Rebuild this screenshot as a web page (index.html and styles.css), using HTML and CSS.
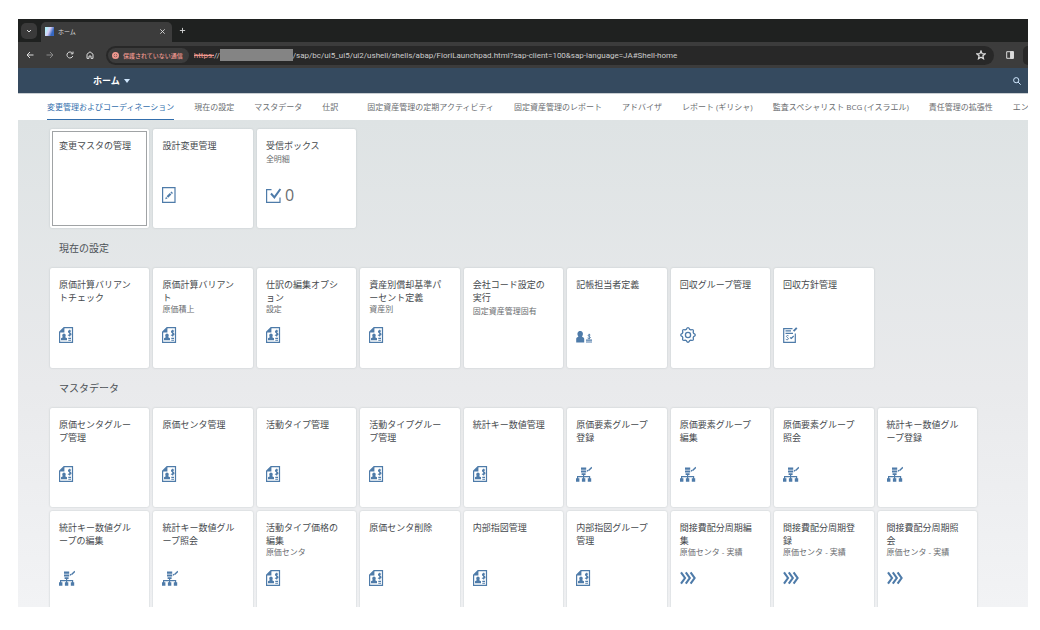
FILE: index.html
```html
<!DOCTYPE html>
<html lang="ja">
<head>
<meta charset="utf-8">
<title>ホーム</title>
<link rel="stylesheet" href="styles.css">
</head>
<body>
<svg class="defs" aria-hidden="true">
  <symbol id="i-cost" viewBox="0 0 16 16">
    <path fill="none" stroke="currentColor" stroke-width="1.2" d="M5 .7H13.5V15.3H.6V5z"/>
    <path fill="currentColor" d="M.3 5.4L5.4.3V5.4zM2 13.2V11.2L3.8 10.2C2.8 8.8 3.1 6.5 5 6.5S7.2 8.8 6.2 10.2L8 11.2V13.2zM9.3 10.8H12V11.9H9.3zM9.3 12.7H12V13.8H9.3z"/>
    <path fill="none" stroke="currentColor" stroke-width="1.1" d="M12 4.2C10.8 3.3 9.3 3.8 9.5 4.8S12 6 12 7.2S10 8.8 9 7.9M10.7 2.8V9.4"/>
  </symbol>
  <symbol id="i-edit" viewBox="0 0 16 16">
    <path fill="none" stroke="currentColor" stroke-width="1.2" d="M.6.7H13V15.3H.6z"/>
    <path fill="currentColor" d="M3.2 12.2L4 9.8L5.6 11.4zM4.6 9.2L7.8 6L9.4 7.6L6.2 10.8zM8.4 5.4L9.4 4.4L11 6L10 7z"/>
  </symbol>
  <symbol id="i-check" viewBox="0 0 16 16">
    <path fill="none" stroke="currentColor" stroke-width="1.2" d="M5.5 2.7H.6V15.4H14V10.5"/>
    <path fill="none" stroke="currentColor" stroke-width="2" d="M5 6.5L8.4 10.4L14.4 2"/>
  </symbol>
  <symbol id="i-person" viewBox="0 0 16 16">
    <path fill="currentColor" d="M.2 15.5V11.5Q.4 10.2 2.4 9.7C.4 6.5 1.8 4 4.2 4S8 6.5 6 9.7Q8 10.2 8.2 11.5V15.5zM10 12.6H16V13.7H10zM10 14.5H16V15.6H10z"/>
    <path fill="none" stroke="currentColor" d="M14.3 8C12.8 7.2 12 8 12.3 8.8S14.4 9.6 14.3 10.6S12.6 11.7 11.6 11M13.2 6.8V12.3"/>
  </symbol>
  <symbol id="i-gear" viewBox="0 0 16 16">
    <path fill="none" stroke="currentColor" stroke-width="1.3" stroke-linejoin="round" d="M6.3 2.4Q8-1 9.7 2.4L10.8 2.8Q14.3 1.7 13.2 5.2L13.6 6.3Q17 8 13.6 9.7L13.2 10.8Q14.3 14.3 10.8 13.2L9.7 13.6Q8 17 6.3 13.6L5.2 13.2Q1.7 14.3 2.8 10.8L2.4 9.7Q-1 8 2.4 6.3L2.8 5.2Q1.7 1.7 5.2 2.8z"/>
    <circle cx="8" cy="8" r="2.6" fill="none" stroke="currentColor" stroke-width="1.3"/>
  </symbol>
  <symbol id="i-policy" viewBox="0 0 16 16">
    <path fill="none" stroke="currentColor" stroke-width="1.2" d="M9.5 1.6H.7V15.4H12.3V6.5M2.5 3.9H8M2.5 6.3H10M7 10.4L8.3 11.4L10.7 9"/>
    <path fill="none" stroke="currentColor" stroke-width="1.8" d="M10.6 4.2L13.8.8"/>
    <path fill="none" stroke="currentColor" d="M5.5 8.8C4 8 3.2 9 3.6 9.8S5.8 10.8 5.3 12S3.6 12.8 2.8 12.2"/>
  </symbol>
  <symbol id="i-tree" viewBox="0 0 16 16">
    <path fill="currentColor" d="M5 1.6H10.2V3.8H5zM5 4.5H10.2V6.6H5zM5.6 7.2H9.6V9H5.6zM0 12.3H3.4V15.8H0zM5.9 12.3H9.3V15.8H5.9zM11.8 12.3H15.2V15.8H11.8z"/>
    <path fill="none" stroke="currentColor" stroke-width="1.2" d="M1.6 13V10.6H13.6V13M7.6 8.5V13"/>
    <path fill="none" stroke="currentColor" stroke-width="1.4" d="M11 4.4L12.2 5.2M12.6 4.5L15.9 1.3"/>
  </symbol>
  <symbol id="i-flow" viewBox="0 0 16 16">
    <path fill="none" stroke="currentColor" stroke-width="2.1" d="M1 2.3L5 8L1 13.7M5.8 2.3L9.8 8L5.8 13.7M10.6 2.3L14.6 8L10.6 13.7"/>
  </symbol>
</svg>

<div class="window">
  <div class="tabstrip">
    <button class="tabsearch" aria-label="タブを検索"><svg viewBox="0 0 8 8"><path d="M2 3l2 2 2-2"/></svg></button>
    <div class="browser-tab">
      <span class="favicon"></span>
      <span class="tab-title">ホーム</span>
      <button class="plain" aria-label="閉じる"><svg viewBox="0 0 8 8"><path d="M1.5 1.5l5 5M6.5 1.5l-5 5"/></svg></button>
    </div>
    <button class="plain newtab" aria-label="新しいタブ"><svg viewBox="0 0 8 8"><path d="M4 1v6M1 4h6"/></svg></button>
  </div>

  <div class="toolbar">
    <button class="plain" aria-label="戻る"><svg viewBox="0 0 8 8"><path d="M7.5 4H1M4 1L1 4l3 3"/></svg></button>
    <button class="plain dim" aria-label="進む"><svg viewBox="0 0 8 8"><path d="M.5 4H7M4 1l3 3-3 3"/></svg></button>
    <button class="plain" aria-label="再読み込み"><svg viewBox="0 0 8 8"><path d="M6.8 5A3 3 0 1 1 6.4 2.2M7 .6v2.2H4.8"/></svg></button>
    <button class="plain" aria-label="ホームページ"><svg viewBox="0 0 8 8"><path d="M1 3.2L4 .8l3 2.4v4.2H5V5H3v2.4H1z"/></svg></button>
    <div class="address">
      <span class="chip"><svg viewBox="0 0 8 8"><circle cx="4" cy="4" r="3"/><path d="M2.9 2.9l2.2 2.2M5.1 2.9L2.9 5.1"/></svg>保護されていない通信</span>
      <span class="url"><s>https:</s>//<span class="mask"></span>/sap/bc/ui5_ui5/ui2/ushell/shells/abap/FioriLaunchpad.html?sap-client=100&amp;sap-language=JA#Shell-home</span>
      <button class="plain star" aria-label="ブックマーク"><svg viewBox="0 0 8 8"><path d="M4 .8l.9 2.1 2.4.2-1.8 1.5.5 2.4L4 5.8 2 7l.5-2.4L.7 3.1l2.4-.2z"/></svg></button>
    </div>
    <button class="plain" aria-label="サイドパネル"><svg viewBox="0 0 8 8"><path d="M.7.7h6.6v6.6H.7z"/><path class="solid" d="M4.6.7h2.7v6.6H4.6z"/></svg></button>
    <span class="edge"></span>
  </div>

  <header class="shell">
    <button class="title">ホーム<span class="caret"></span></button>
    <button class="search" aria-label="検索"><svg viewBox="0 0 8 8"><circle cx="3.2" cy="3.2" r="2.6"/><path d="M5.1 5.1l2.6 2.6"/></svg></button>
  </header>

  <nav class="groups">
    <a class="current" href="#">変更管理およびコーディネーション</a>
    <a href="#">現在の設定</a>
    <a href="#">マスタデータ</a>
    <a class="wide" href="#">仕訳</a>
    <a href="#">固定資産管理の定期アクティビティ</a>
    <a href="#">固定資産管理のレポート</a>
    <a href="#">アドバイザ</a>
    <a href="#">レポート (ギリシャ)</a>
    <a href="#">監査スペシャリスト BCG (イスラエル)</a>
    <a href="#">責任管理の拡張性</a>
    <a href="#">エン</a>
  </nav>

  <main class="content">
    <section class="tiles">
      <a class="tile focused" href="#"><h3>変更マスタの管理</h3></a>
      <a class="tile" href="#"><h3>設計変更管理</h3><svg class="icon"><use href="#i-edit"/></svg></a>
      <a class="tile" href="#"><h3>受信ボックス</h3><p class="spaced">全明細</p><span class="kpi"><svg class="icon"><use href="#i-check"/></svg>0</span></a>
    </section>

    <h2>現在の設定</h2>
    <section class="tiles">
      <a class="tile" href="#"><h3>原価計算バリアントチェック</h3><svg class="icon"><use href="#i-cost"/></svg></a>
      <a class="tile" href="#"><h3>原価計算バリアント</h3><p>原価積上</p><svg class="icon"><use href="#i-cost"/></svg></a>
      <a class="tile" href="#"><h3>仕訳の編集オプション</h3><p>設定</p><svg class="icon"><use href="#i-cost"/></svg></a>
      <a class="tile" href="#"><h3>資産別償却基準パーセント定義</h3><p>資産別</p><svg class="icon"><use href="#i-cost"/></svg></a>
      <a class="tile" href="#"><h3>会社コード設定の実行</h3><p class="spaced">固定資産管理固有</p></a>
      <a class="tile" href="#"><h3>記帳担当者定義</h3><svg class="icon"><use href="#i-person"/></svg></a>
      <a class="tile" href="#"><h3>回収グループ管理</h3><svg class="icon"><use href="#i-gear"/></svg></a>
      <a class="tile" href="#"><h3>回収方針管理</h3><svg class="icon"><use href="#i-policy"/></svg></a>
    </section>

    <h2>マスタデータ</h2>
    <section class="tiles">
      <a class="tile" href="#"><h3>原価センタグループ管理</h3><svg class="icon"><use href="#i-cost"/></svg></a>
      <a class="tile" href="#"><h3>原価センタ管理</h3><svg class="icon"><use href="#i-cost"/></svg></a>
      <a class="tile" href="#"><h3>活動タイプ管理</h3><svg class="icon"><use href="#i-cost"/></svg></a>
      <a class="tile" href="#"><h3>活動タイプグループ管理</h3><svg class="icon"><use href="#i-cost"/></svg></a>
      <a class="tile" href="#"><h3>統計キー数値管理</h3><svg class="icon"><use href="#i-cost"/></svg></a>
      <a class="tile" href="#"><h3>原価要素グループ登録</h3><svg class="icon"><use href="#i-tree"/></svg></a>
      <a class="tile" href="#"><h3>原価要素グループ編集</h3><svg class="icon"><use href="#i-tree"/></svg></a>
      <a class="tile" href="#"><h3>原価要素グループ照会</h3><svg class="icon"><use href="#i-tree"/></svg></a>
      <a class="tile" href="#"><h3>統計キー数値グループ登録</h3><svg class="icon"><use href="#i-tree"/></svg></a>
      <a class="tile" href="#"><h3>統計キー数値グループの編集</h3><svg class="icon"><use href="#i-tree"/></svg></a>
      <a class="tile" href="#"><h3>統計キー数値グループ照会</h3><svg class="icon"><use href="#i-tree"/></svg></a>
      <a class="tile" href="#"><h3>活動タイプ価格の編集</h3><p>原価センタ</p><svg class="icon"><use href="#i-cost"/></svg></a>
      <a class="tile" href="#"><h3>原価センタ削除</h3><svg class="icon"><use href="#i-cost"/></svg></a>
      <a class="tile" href="#"><h3>内部指図管理</h3><svg class="icon"><use href="#i-cost"/></svg></a>
      <a class="tile" href="#"><h3>内部指図グループ管理</h3><svg class="icon"><use href="#i-cost"/></svg></a>
      <a class="tile" href="#"><h3>間接費配分周期編集</h3><p>原価センタ - 実績</p><svg class="icon"><use href="#i-flow"/></svg></a>
      <a class="tile" href="#"><h3>間接費配分周期登録</h3><p>原価センタ - 実績</p><svg class="icon"><use href="#i-flow"/></svg></a>
      <a class="tile" href="#"><h3>間接費配分周期照会</h3><p>原価センタ - 実績</p><svg class="icon"><use href="#i-flow"/></svg></a>
    </section>
  </main>
</div>
</body>
</html>
```
FILE: styles.css
```css
* { box-sizing: border-box; }

body {
  margin: 0;
  background: #fff;
  font-family: "Open Sans", "Noto Sans CJK JP", sans-serif;
}

h2, h3, p { margin: 0; font-weight: 400; }
a { color: inherit; text-decoration: none; }

button {
  padding: 0;
  border: 0;
  background: none;
  color: inherit;
  font-family: inherit;
}

.defs { display: none; }

.window {
  display: flex;
  flex-direction: column;
  height: calc(100vh - 42px);
  margin: 19px 12px 23px 18px;
  overflow: hidden;
}

.tabstrip, .toolbar { color: #dcdcdc; flex: none; }

.tabstrip svg, .toolbar svg, .search svg {
  display: block;
  width: 8px;
  height: 8px;
  fill: none;
  stroke: currentColor;
}

.tabstrip {
  display: flex;
  align-items: center;
  height: 23px;
  padding-left: 3px;
  background: #1f2120;
}

.tabsearch {
  display: grid;
  place-items: center;
  width: 16px;
  height: 16px;
  margin-right: 4px;
  border-radius: 5px;
  background: #3a3a3a;
}

.browser-tab {
  display: flex;
  align-items: center;
  gap: 4px;
  align-self: flex-end;
  width: 131px;
  height: 20px;
  padding: 0 6px 2px 4px;
  border-radius: 5px 5px 0 0;
  background: #3c3c3c;
}

.favicon {
  width: 9px;
  height: 9px;
  background: linear-gradient(115deg, #b8ecf8 20%, #d9cdf5 45%, #3567c0 75%);
}

.tab-title { flex: 1; font-size: 6px; }
.browser-tab .plain svg { width: 7px; height: 7px; }
.newtab { margin-left: 7px; }
.newtab svg { width: 7px; height: 7px; }

.toolbar {
  display: flex;
  align-items: center;
  gap: 12px;
  height: 26px;
  padding-left: 8px;
  background: #3c3c3c;
}

.dim { color: #888; }

.address {
  display: flex;
  flex: 1;
  align-items: center;
  min-width: 0;
  height: 19px;
  padding: 0 8px 0 2px;
  border-radius: 10px;
  background: #282828;
}

.chip {
  display: flex;
  flex: none;
  align-items: center;
  gap: 4px;
  height: 15px;
  padding: 0 6px 0 4px;
  border-radius: 8px;
  background: #3c3c3c;
  color: #f0988f;
  font-size: 6px;
  font-weight: 500;
}

.chip svg { width: 7px; height: 7px; stroke-width: 2; }

.url {
  display: flex;
  flex: 1;
  align-items: center;
  margin-left: 5px;
  overflow: hidden;
  color: #ccc;
  font-family: Roboto, sans-serif;
  font-size: 8px;
  white-space: nowrap;
}

.url s { color: #f0988f; }
.mask { width: 73px; height: 12px; background: #848484; }
.star svg { width: 10px; height: 10px; }
.solid { fill: currentColor; }

.edge {
  width: 5px;
  height: 19px;
  margin-left: -3px;
  border-radius: 10px 0 0 10px;
  background: #282828;
}

.shell {
  display: flex;
  flex: none;
  align-items: center;
  justify-content: space-between;
  height: 25px;
  padding: 0 7px 0 75px;
  background: #354a5f;
  color: #fff;
}

.title {
  display: flex;
  align-items: center;
  gap: 4px;
  font-size: 9px;
  font-weight: 700;
}

.caret {
  border: 3px solid transparent;
  border-top: 4px solid #d1e8ff;
  border-bottom: 0;
}

.search { color: #d1e8ff; }

.groups {
  display: flex;
  flex: none;
  gap: 20px;
  height: 27px;
  padding-left: 29px;
  overflow: hidden;
  border-top: 1px solid #c9ced2;
  background: #fff;
  color: #6a6d70;
  font-size: 8px;
  line-height: 25px;
  white-space: nowrap;
}

.groups a { flex: none; }
.groups .wide { margin-right: 9px; }
.groups .current { border-bottom: 1px solid #346fad; color: #346fad; }

.content {
  flex: 1;
  min-height: 0;
  padding: 9px 51px 0 32px;
  overflow: hidden;
  background: linear-gradient(#dee3e4, #e9eaec 55%, #f2f3f5);
}

.content h2 {
  padding-left: 9px;
  color: #4c5156;
  font-size: 10px;
  line-height: 40px;
}

.tiles {
  display: grid;
  grid-template-columns: repeat(auto-fill, minmax(96px, 1fr));
  gap: 4px;
}

.tile {
  display: flex;
  flex-direction: column;
  aspect-ratio: 1;
  padding: 10px 16px 25px 9px;
  border-radius: 2px;
  background: #fff;
  box-shadow: 0 0 2px #bcc2c5;
  color: #45494d;
}

.focused {
  outline: 1px solid #a0a3a5;
  outline-offset: -3px;
}

.tile h3 {
  font-size: 9px;
  line-height: 13px;
  word-break: break-all;
  line-break: anywhere;
}

.tile p {
  color: #6a6d70;
  font-size: 8px;
  line-height: 10px;
  white-space: nowrap;
}

.tile .spaced { margin-top: 2px; }

.icon {
  width: 16px;
  height: 16px;
  margin-top: auto;
  color: #4e7ba9;
}

.kpi {
  display: flex;
  align-items: center;
  gap: 3px;
  margin-top: auto;
  color: #6a6d70;
  font-size: 16px;
  line-height: 16px;
}
```
